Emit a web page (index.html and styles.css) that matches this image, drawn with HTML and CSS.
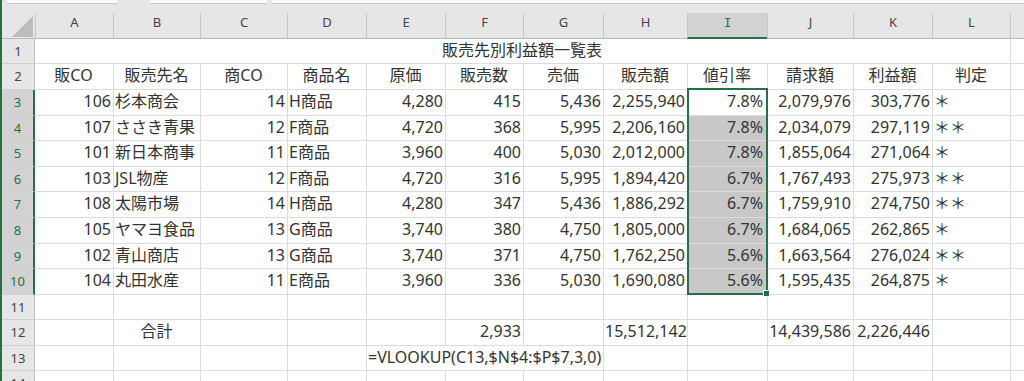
FILE: index.html
```html
<!DOCTYPE html>
<html lang="ja">
<head>
<meta charset="utf-8">
<title>販売先別利益額一覧表</title>
<link rel="stylesheet" href="styles.css">
</head>
<body>
<div class="app">
  <div class="topbar">
    <div class="tb tb1"></div>
    <div class="tb tb2"></div>
    <div class="tb tb3"></div>
  </div>
  <div class="sheet">
    <div class="row">
      <div class="corner"><svg width="33" height="25" viewBox="0 0 33 25"><polygon points="10,24 31,24 31,3" fill="#bcbcbc"/></svg></div>
      <div class="ch">A</div><div class="ch">B</div><div class="ch">C</div><div class="ch">D</div><div class="ch">E</div><div class="ch">F</div><div class="ch">G</div><div class="ch">H</div><div class="ch sel"><span class="ser">I</span></div><div class="ch">J</div><div class="ch">K</div><div class="ch">L</div><div class="ch"></div>
    </div>
    <div class="row">
      <div class="rh">1</div>
      <div class="c title">販売先別利益額一覧表</div><div class="c"></div>
    </div>
    <div class="row">
      <div class="rh">2</div>
      <div class="c m">販CO</div><div class="c m">販売先名</div><div class="c m">商CO</div><div class="c m">商品名</div><div class="c m">原価</div><div class="c m">販売数</div><div class="c m">売価</div><div class="c m">販売額</div><div class="c m">値引率</div><div class="c m">請求額</div><div class="c m">利益額</div><div class="c m">判定</div><div class="c"></div>
    </div>
    <div class="row">
      <div class="rh sel">3</div>
      <div class="c n">106</div><div class="c">杉本商会</div><div class="c n">14</div><div class="c">H商品</div><div class="c n">4,280</div><div class="c n">415</div><div class="c n">5,436</div><div class="c n">2,255,940</div><div class="c n pc">7.8%</div><div class="c n">2,079,976</div><div class="c n">303,776</div><div class="c">＊</div><div class="c"></div>
    </div>
    <div class="row">
      <div class="rh sel">4</div>
      <div class="c n">107</div><div class="c">ささき青果</div><div class="c n">12</div><div class="c">F商品</div><div class="c n">4,720</div><div class="c n">368</div><div class="c n">5,995</div><div class="c n">2,206,160</div><div class="c n pc hl">7.8%</div><div class="c n">2,034,079</div><div class="c n">297,119</div><div class="c">＊＊</div><div class="c"></div>
    </div>
    <div class="row">
      <div class="rh sel">5</div>
      <div class="c n">101</div><div class="c">新日本商事</div><div class="c n">11</div><div class="c">E商品</div><div class="c n">3,960</div><div class="c n">400</div><div class="c n">5,030</div><div class="c n">2,012,000</div><div class="c n pc hl">7.8%</div><div class="c n">1,855,064</div><div class="c n">271,064</div><div class="c">＊</div><div class="c"></div>
    </div>
    <div class="row">
      <div class="rh sel">6</div>
      <div class="c n">103</div><div class="c">JSL物産</div><div class="c n">12</div><div class="c">F商品</div><div class="c n">4,720</div><div class="c n">316</div><div class="c n">5,995</div><div class="c n">1,894,420</div><div class="c n pc hl">6.7%</div><div class="c n">1,767,493</div><div class="c n">275,973</div><div class="c">＊＊</div><div class="c"></div>
    </div>
    <div class="row">
      <div class="rh sel">7</div>
      <div class="c n">108</div><div class="c">太陽市場</div><div class="c n">14</div><div class="c">H商品</div><div class="c n">4,280</div><div class="c n">347</div><div class="c n">5,436</div><div class="c n">1,886,292</div><div class="c n pc hl">6.7%</div><div class="c n">1,759,910</div><div class="c n">274,750</div><div class="c">＊＊</div><div class="c"></div>
    </div>
    <div class="row">
      <div class="rh sel">8</div>
      <div class="c n">105</div><div class="c">ヤマヨ食品</div><div class="c n">13</div><div class="c">G商品</div><div class="c n">3,740</div><div class="c n">380</div><div class="c n">4,750</div><div class="c n">1,805,000</div><div class="c n pc hl">6.7%</div><div class="c n">1,684,065</div><div class="c n">262,865</div><div class="c">＊</div><div class="c"></div>
    </div>
    <div class="row">
      <div class="rh sel">9</div>
      <div class="c n">102</div><div class="c">青山商店</div><div class="c n">13</div><div class="c">G商品</div><div class="c n">3,740</div><div class="c n">371</div><div class="c n">4,750</div><div class="c n">1,762,250</div><div class="c n pc hl">5.6%</div><div class="c n">1,663,564</div><div class="c n">276,024</div><div class="c">＊＊</div><div class="c"></div>
    </div>
    <div class="row">
      <div class="rh sel">10</div>
      <div class="c n">104</div><div class="c">丸田水産</div><div class="c n">11</div><div class="c">E商品</div><div class="c n">3,960</div><div class="c n">336</div><div class="c n">5,030</div><div class="c n">1,690,080</div><div class="c n pc hl">5.6%</div><div class="c n">1,595,435</div><div class="c n">264,875</div><div class="c">＊</div><div class="c"></div>
    </div>
    <div class="row">
      <div class="rh">11</div>
      <div class="c"></div><div class="c"></div><div class="c"></div><div class="c"></div><div class="c"></div><div class="c"></div><div class="c"></div><div class="c"></div><div class="c"></div><div class="c"></div><div class="c"></div><div class="c"></div><div class="c"></div>
    </div>
    <div class="row">
      <div class="rh">12</div>
      <div class="c"></div><div class="c m">合計</div><div class="c"></div><div class="c"></div><div class="c"></div><div class="c n">2,933</div><div class="c"></div><div class="c n">15,512,142</div><div class="c"></div><div class="c n">14,439,586</div><div class="c n">2,226,446</div><div class="c"></div><div class="c"></div>
    </div>
    <div class="row">
      <div class="rh">13</div>
      <div class="c"></div><div class="c"></div><div class="c"></div><div class="c"></div><div class="c formula">=VLOOKUP(C13,$N$4:$P$7,3,0)</div><div class="c"></div><div class="c"></div><div class="c"></div><div class="c"></div><div class="c"></div><div class="c"></div>
    </div>
    <div class="row">
      <div class="rh">14</div>
      <div class="c"></div><div class="c"></div><div class="c"></div><div class="c"></div><div class="c"></div><div class="c"></div><div class="c"></div><div class="c"></div><div class="c"></div><div class="c"></div><div class="c"></div><div class="c"></div><div class="c"></div>
    </div>
    <div class="selbox"><div class="handle"></div></div>
  </div>
</div>
</body>
</html>
```
FILE: styles.css
```css
* {
  box-sizing: border-box;
  margin: 0;
  padding: 0;
}

html, body {
  width: 1024px;
  height: 381px;
  overflow: hidden;
  background: #ffffff;
}

body {
  font-family: "Noto Sans", "Noto Sans CJK JP", sans-serif;
  color: #333333;
}

.app {
  border-left: 2px solid #2f6b44;
  height: 381px;
  overflow: hidden;
}

.topbar {
  height: 13px;
  background: #e6e6e6;
  display: flex;
  align-items: flex-start;
}

.tb {
  height: 4px;
  background: #fafafa;
  border-bottom: 1px solid #c9c9c9;
}

.tb1 { margin-left: 5px; width: 110px; }
.tb2 { margin-left: 33px; width: 117px; }
.tb3 { margin-left: 5px; flex: 1; }

.sheet {
  position: relative;
  display: grid;
  grid-template-columns: 33px 78px 87px 87px 79px 79px 78px 80px 84px 80px 86px 79px 78px 1fr;
  grid-template-rows: 26px 25px 26px 26px 25px 26px 25px 26px 26px 25px 26px 25px 26px 25px 26px;
}

.row {
  display: contents;
}

.corner {
  background: #e6e6e6;
  border-bottom: 1px solid #b9b9b9;
}

.corner svg {
  display: block;
}

.ch {
  background: #e6e6e6;
  border-left: 1px solid #c6c6c6;
  border-bottom: 1px solid #b9b9b9;
  font-size: 13px;
  line-height: 18px;
  text-align: center;
  color: #444444;
}

.ch.sel {
  background: #d2d2d2;
  color: #217346;
  border-bottom: 2px solid #217346;
}

.ser {
  font-family: "DejaVu Sans Mono", monospace;
  font-size: 12px;
}

.rh {
  background: #e6e6e6;
  border-right: 1px solid #bdbdbd;
  border-bottom: 1px solid #d0d0d0;
  font-size: 13px;
  line-height: 25px;
  text-align: center;
  color: #444444;
}

.rh.sel {
  background: #d2d2d2;
  color: #217346;
  border-right: 2px solid #217346;
}

.c {
  border-left: 1px solid #dcdcdc;
  border-bottom: 1px solid #dcdcdc;
  padding: 0 2px 0 1px;
  font-size: 16px;
  line-height: 23px;
  white-space: nowrap;
  overflow: hidden;
}

.row > .c:nth-child(2) {
  border-left: none;
}

.n { text-align: right; }
.m { text-align: center; }

.pc { padding-right: 4px; }
.hl { background: #c8c8c8; }

.title {
  grid-column: span 12;
  text-align: center;
}

.formula {
  grid-column: span 3;
  overflow: visible;
  position: relative;
  z-index: 1;
}

.selbox {
  position: absolute;
  grid-column: 10 / 11;
  grid-row: 4 / 12;
  top: -2px;
  left: 0;
  right: -1px;
  bottom: 0;
  border: 2px solid #217346;
  pointer-events: none;
}

.handle {
  position: absolute;
  right: -4px;
  bottom: -4px;
  width: 7px;
  height: 7px;
  background: #217346;
  border: 1px solid #ffffff;
}
```
